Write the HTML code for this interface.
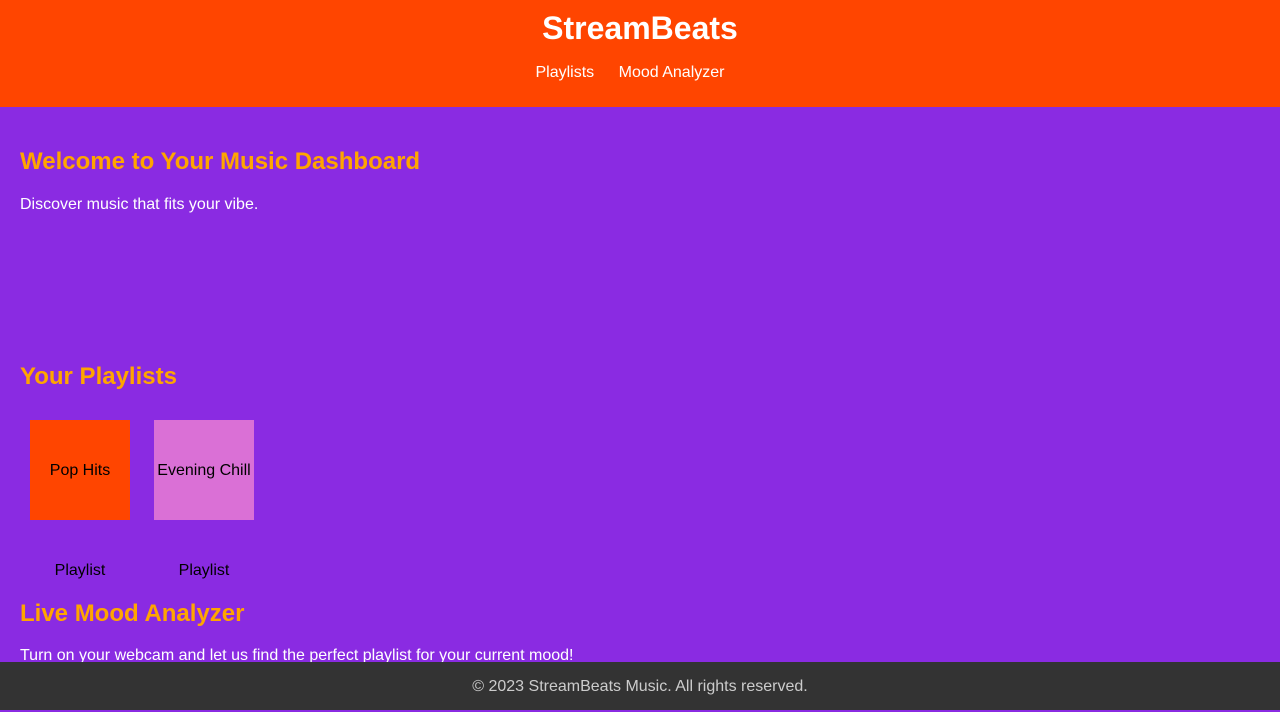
<!DOCTYPE html>
<html><head><meta charset="utf-8"><style>
*{margin:0;padding:0;box-sizing:border-box}
body{width:1280px;height:710px;overflow:hidden;background:#8A2BE2;font-family:"Liberation Sans",sans-serif;color:#fff;position:relative}
header{background:#FF4500;height:107px;text-align:center}
header h1{font-size:32px;line-height:32px;padding-top:12px;font-weight:bold}
nav{margin-top:20px;font-size:16px}
nav a{color:#fff;text-decoration:none;margin-right:20px}
h2{color:#FFA500;font-size:24px;position:absolute;left:20px;line-height:28px}
p{position:absolute;left:20px;font-size:16px;line-height:18px}
.card{position:absolute;top:420px;width:100px;height:100px;color:#000;font-size:16px;display:flex;align-items:center;justify-content:center;white-space:nowrap;padding-top:2px}
.lbl{position:absolute;top:562px;width:100px;text-align:center;color:#000;font-size:16px}
footer{position:absolute;left:0;top:662px;width:1280px;height:48px;background:#333;color:#ccc;text-align:center;font-size:16px;line-height:50px}
</style></head><body>
<header><h1>StreamBeats</h1><nav><a>Playlists</a> <a>Mood Analyzer</a></nav></header>
<h2 style="top:148px">Welcome to Your Music Dashboard</h2>
<p style="top:196px">Discover music that fits your vibe.</p>
<h2 style="top:363px">Your Playlists</h2>
<div class="card" style="left:30px;background:#FF4500">Pop Hits</div>
<div class="card" style="left:154px;background:#DA70D6">Evening Chill</div>
<div class="lbl" style="left:30px">Playlist</div>
<div class="lbl" style="left:154px">Playlist</div>
<h2 style="top:600px">Live Mood Analyzer</h2>
<p style="top:647px">Turn on your webcam and let us find the perfect playlist for your current mood!</p>
<footer>© 2023 StreamBeats Music. All rights reserved.</footer>
</body></html>
